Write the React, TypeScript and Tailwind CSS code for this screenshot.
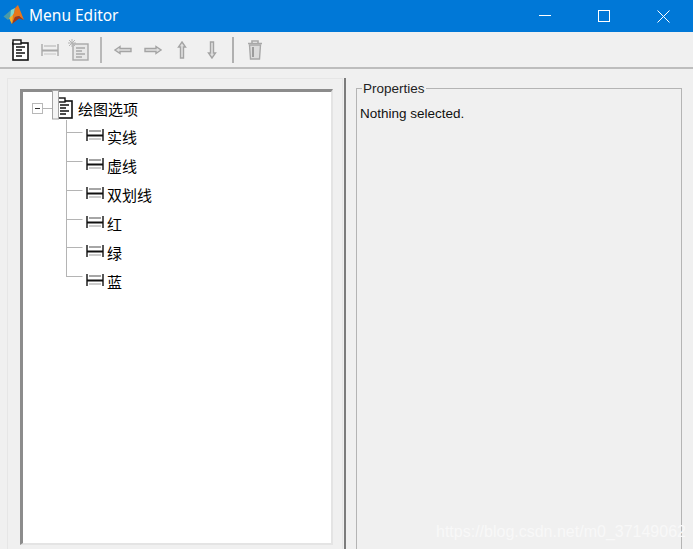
import { ReactNode } from "react";

const treeItems = ["实线", "虚线", "双划线", "红", "绿", "蓝"];

function MatlabLogo() {
  return (
    <svg width="22" height="22" viewBox="0 0 22 22" className="shrink-0">
      <polygon points="0.5,11.5 8,5 11,10 5,15" fill="#4a9aa8" />
      <polygon points="8,5 12,3 11,11 7,14" fill="#7fd4cc" />
      <polygon points="12,3 15,0 21,15 16,11 12,12 9,19 7,15 11,8" fill="#e8761a" />
      <polygon points="12,12 16,11 21,15 16,13.5 9,19" fill="#a9340f" />
      <polygon points="6,13 10,10 9,19" fill="#f0b12c" />
    </svg>
  );
}

function MenuDocIcon({ grey }: { grey?: boolean }) {
  const c = grey ? "#a8a8a8" : "#111";
  return (
    <svg width="18" height="22" viewBox="0 0 18 22">
      <rect x="1" y="4" width="15" height="17" fill={grey ? "#e8e8e8" : "#fff"} stroke={c} strokeWidth="1.6" />
      <rect x="1" y="1" width="8" height="4" fill={grey ? "#d0d0d0" : "#fff"} stroke={c} strokeWidth="1.4" />
      <path d="M4 8h9M4 11h6M4 14h9M4 17h6" stroke={c} strokeWidth="1.4" />
    </svg>
  );
}

function ItemIcon({ grey }: { grey?: boolean }) {
  const c = grey ? "#a9a9a9" : "#111";
  return (
    <svg width="18" height="14" viewBox="0 0 18 14">
      <path d="M1 1v12M17 1v12" stroke={c} strokeWidth="1.4" />
      <path d="M1 7.5h16" stroke={c} strokeWidth="2" />
      <path d="M3 3h12" stroke={grey ? "#c4c4c4" : "#888"} strokeWidth="1.5" />
      <path d="M3 11h12" stroke={grey ? "#c4c4c4" : "#999"} strokeWidth="1" />
    </svg>
  );
}

function NewSubIcon() {
  return (
    <svg width="22" height="22" viewBox="0 0 22 22">
      <rect x="5" y="5" width="15" height="16" fill="#e8e8e8" stroke="#a8a8a8" strokeWidth="1.4" />
      <path d="M8 9h9M8 12h6M8 15h9M8 18h6" stroke="#a8a8a8" strokeWidth="1.3" />
      <path d="M4 0v8M0 4h8M1 1l6 6M7 1l-6 6" stroke="#b4b4b4" strokeWidth="1" />
    </svg>
  );
}

function ArrowIcon({ direction }: { direction: "left" | "right" | "up" | "down" }) {
  const rotate = { left: 0, right: 180, up: 90, down: 270 }[direction];
  return (
    <svg width="18" height="18" viewBox="0 0 18 18">
      <g transform={`rotate(${rotate} 9 9)`}>
        <polygon
          points="1,9 6,5.5 6,7.5 17,7.5 17,10.5 6,10.5 6,12.5"
          fill="#e0e0e0"
          stroke="#a4a4a4"
          strokeWidth="1.4"
        />
      </g>
    </svg>
  );
}

function TrashIcon() {
  return (
    <svg width="16" height="20" viewBox="0 0 16 20">
      <path d="M1 3.5h14M5 3V1h6v2" fill="none" stroke="#a8a8a8" strokeWidth="1.6" />
      <path d="M2.5 5h11l-1 14h-9z" fill="#dcdcdc" stroke="#a8a8a8" strokeWidth="1.4" />
      <path d="M6 7v10" stroke="#9c9c9c" strokeWidth="2" />
    </svg>
  );
}

function ToolSlot({ width, children }: { width: string; children: ReactNode }) {
  return <div className={`flex items-center justify-center ${width}`}>{children}</div>;
}

function TreeLines() {
  // connector lines and the expander box, drawn over the tree
  return (
    <svg width="120" height="210" viewBox="0 0 120 210" className="absolute left-[8px] top-[-3px]">
      <path
        d="M12 19.5h9M35.5 31V188M35.5 43.5h16M35.5 72.5h16M35.5 101.5h16M35.5 130.5h16M35.5 158.5h16M35.5 187.5h16"
        stroke="#b4b4b4"
        fill="none"
      />
      <rect x="1.5" y="14.5" width="10" height="10" fill="#fff" stroke="#b8b8b8" />
      <path d="M4 19.5h5" stroke="#333" />
      <rect x="21.5" y="1.5" width="6" height="28.5" fill="#f4f4f4" stroke="#a4a4a4" />
    </svg>
  );
}

export default function App() {
  return (
    <div className="relative flex h-[549px] w-[693px] flex-col overflow-hidden bg-[#f0f0f0] font-['Liberation_Sans',sans-serif] text-black">
      <header className="flex h-8 shrink-0 items-center bg-[#0078d7] text-white">
        <div className="ml-[3px] mr-[4px] flex">
          <MatlabLogo />
        </div>
        <span className="-mt-[1px] font-['Noto_Sans',sans-serif] text-[15.5px]">Menu Editor</span>
        <div className="ml-auto flex items-center">
          <svg width="14" height="14" viewBox="0 0 14 14" className="mr-[46px]">
            <path d="M1 6.5h12" stroke="#fff" />
          </svg>
          <svg width="12" height="12" viewBox="0 0 12 12" className="mr-[47px]">
            <rect x="0.5" y="0.5" width="11" height="11" fill="none" stroke="#fff" />
          </svg>
          <svg width="13" height="13" viewBox="0 0 13 13" className="mr-[23px]">
            <path d="M0.5 0.5l12 12M12.5 0.5l-12 12" stroke="#fff" />
          </svg>
        </div>
      </header>

      <div className="flex h-[37px] shrink-0 items-center border-b-2 border-[#bdbdbd] pl-[10px]">
        <ToolSlot width="w-[22px]">
          <MenuDocIcon />
        </ToolSlot>
        <ToolSlot width="w-[36px]">
          <ItemIcon grey />
        </ToolSlot>
        <ToolSlot width="w-[22px]">
          <NewSubIcon />
        </ToolSlot>
        <div className="mx-[10px] h-[26px] w-[2px] bg-[#b8b8b8]" />
        <div className="ml-[2px] flex gap-[11.67px]">
          <ArrowIcon direction="left" />
          <ArrowIcon direction="right" />
          <ArrowIcon direction="up" />
          <ArrowIcon direction="down" />
        </div>
        <div className="mx-[11px] h-[26px] w-[2px] bg-[#b0b0b0]" />
        <div className="ml-[2px] flex">
          <TrashIcon />
        </div>
      </div>

      <main className="flex min-h-0 flex-1">
        <section className="mt-[9px] ml-[7px] h-[600px] w-[336px] shrink-0 border border-[#e6e6e6] pt-[10px] pl-[12px]">
          <div className="relative flex h-[456px] w-[313px] flex-col border-t-[3px] border-l-[3px] border-t-[#8c8c8c] border-l-[#8c8c8c] border-r-2 border-b-2 border-r-[#e4e4e4] border-b-[#e4e4e4] bg-white pt-[2px] pl-[33px]">
            <div className="flex h-[28px] shrink-0 items-center gap-[4px] text-[15px]">
              <MenuDocIcon />
              <span className="font-['Noto_Sans_CJK_SC',sans-serif] leading-none">绘图选项</span>
            </div>
            {treeItems.map((label) => (
              <div key={label} className="flex h-[29px] shrink-0 items-center gap-[3px] pl-[30px] text-[15px]">
                <div className="-mt-[3px] flex">
                  <ItemIcon />
                </div>
                <span className="font-['Noto_Sans_CJK_SC',sans-serif] leading-none">{label}</span>
              </div>
            ))}
            <TreeLines />
          </div>
        </section>

        <div className="mt-[9px] ml-px h-[600px] w-[2px] shrink-0 bg-[#7c7c7c]" />

        <fieldset className="mt-[12px] ml-[10px] h-[600px] w-[326px] shrink-0 border border-[#b4b4b4] pl-[3px]">
          <legend className="ml-[2px] px-px text-[13.5px] leading-[15px] text-[#222]">Properties</legend>
          <p className="mt-[10px] text-[13.5px] leading-[15px] text-[#111]">Nothing selected.</p>
        </fieldset>
      </main>

      <div className="pointer-events-none absolute left-[436px] top-[520px] text-[16px] text-[#f8f8f8]">
        https://blog.csdn.net/m0_37149062
      </div>
    </div>
  );
}
